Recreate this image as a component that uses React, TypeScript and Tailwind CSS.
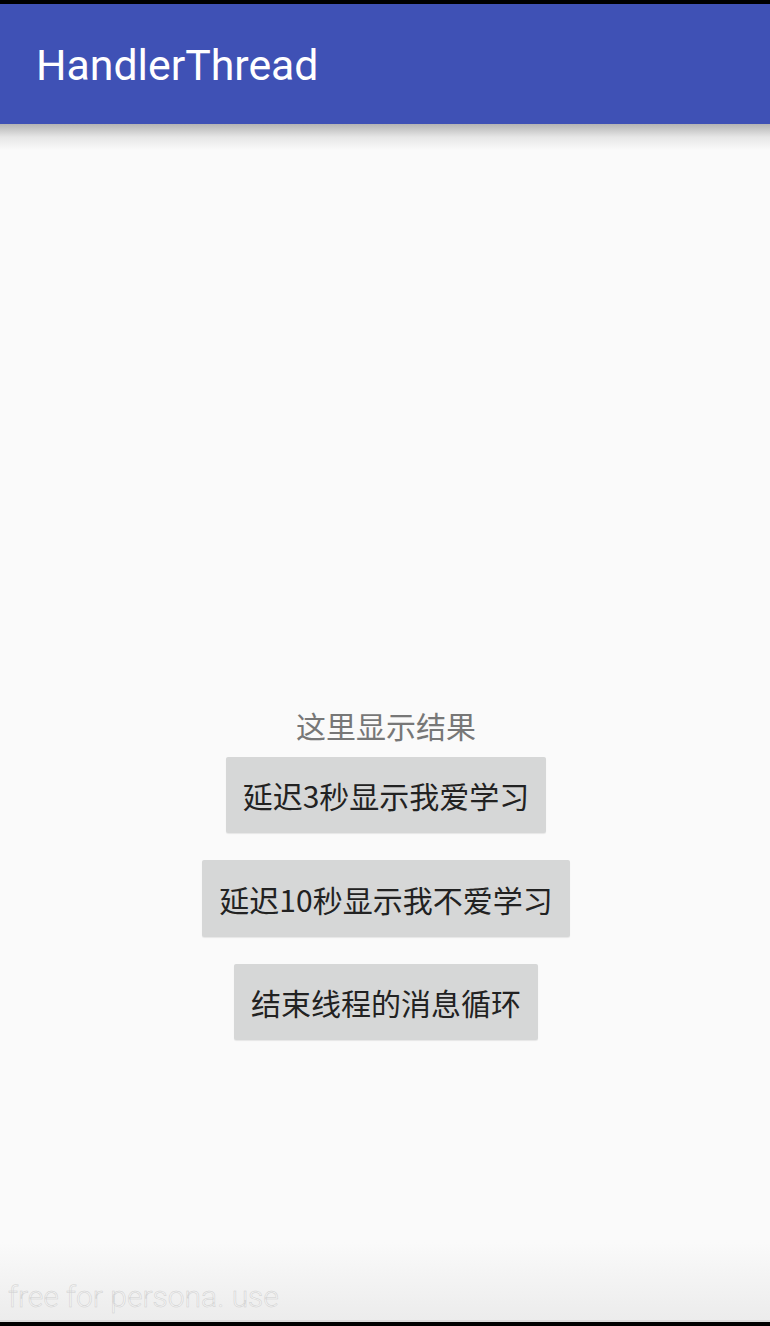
export default function App() {
  const cjk = '"Noto Sans CJK SC", "Noto Sans", sans-serif';
  return (
    <div className="w-[770px] h-[1326px] flex flex-col bg-[#fafafa] overflow-hidden">
      <div className="h-[4px] bg-black shrink-0" />
      <div className="h-[120px] shrink-0 bg-[#3f51b5] flex items-center pl-[36px]">
        <span
          className="text-white text-[42.8px] leading-none pt-[3px]"
          style={{ fontFamily: 'Roboto, "Noto Sans", sans-serif' }}
        >
          HandlerThread
        </span>
      </div>
      <div className="h-[26px] shrink-0 bg-gradient-to-b from-[#b4b4b4] via-[#e6e6e6] to-[#fafafa]" />
      <div className="flex-1 flex flex-col items-center pt-[557px] pl-[2px]" style={{ fontFamily: cjk }}>
        <div className="text-[30px] leading-[36px] text-[#777777]">这里显示结果</div>
        <div className="mt-[14px] flex flex-col items-center gap-[27px]">
          <div className="w-[320px] h-[76px] bg-[#d6d7d7] rounded-[2px] flex items-center justify-center text-[30px] leading-none text-[#222222] shadow-[0_1px_1px_rgba(0,0,0,0.08)]">
            延迟3秒显示我爱学习
          </div>
          <div className="w-[368px] h-[77px] bg-[#d6d7d7] rounded-[2px] flex items-center justify-center text-[30px] leading-none text-[#222222] shadow-[0_1px_1px_rgba(0,0,0,0.08)]">
            延迟10秒显示我不爱学习
          </div>
          <div className="w-[304px] h-[76px] bg-[#d6d7d7] rounded-[2px] flex items-center justify-center text-[30px] leading-none text-[#222222] shadow-[0_1px_1px_rgba(0,0,0,0.08)]">
            结束线程的消息循环
          </div>
        </div>
      </div>
      <div className="h-[80px] shrink-0 bg-gradient-to-b from-[#fafafa] to-[#ececec] flex items-end pl-[8px] pb-[8px] border-b-[2px] border-[#dcdcdc]">
        <span
          className="text-[30px] leading-none font-light text-[#f4f4f4] [-webkit-text-stroke:0.5px_#d0d0d0]"
          style={{ fontFamily: 'Roboto, sans-serif' }}
        >
          free for persona. use
        </span>
      </div>
      <div className="h-[4px] bg-black shrink-0" />
    </div>
  );
}
